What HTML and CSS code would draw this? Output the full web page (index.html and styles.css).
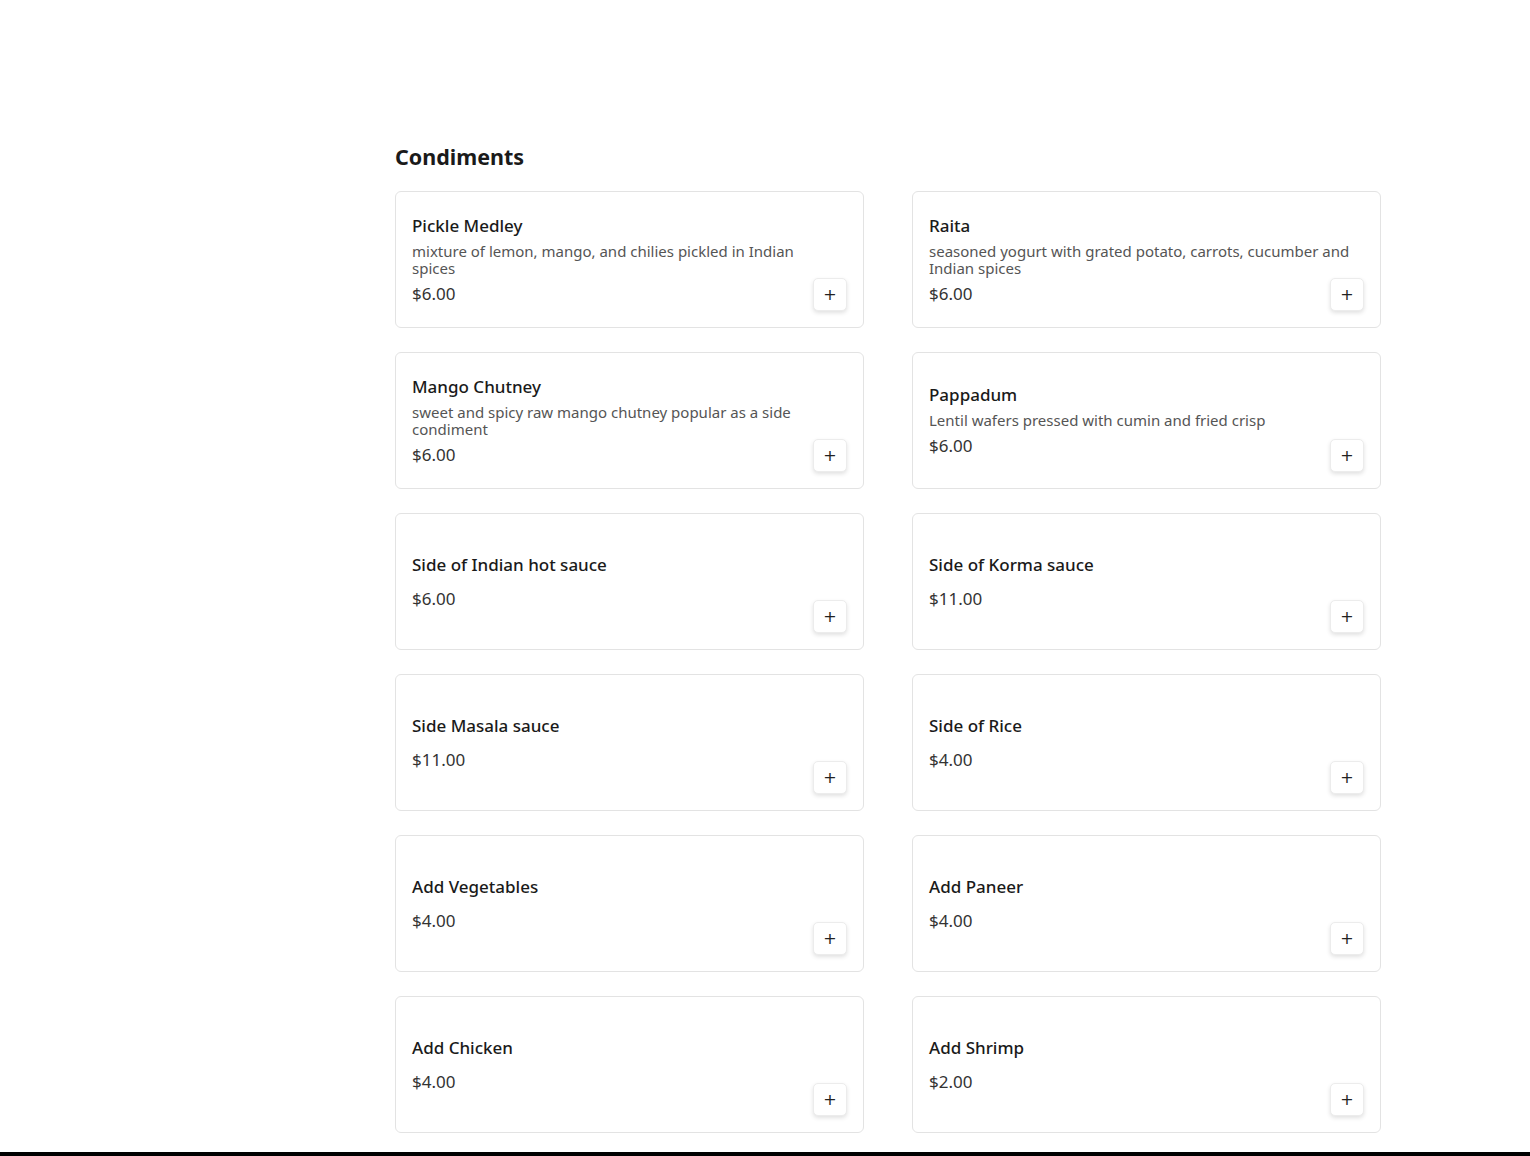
FILE: index.html
```html
<!DOCTYPE html>
<html lang="en">
<head>
<meta charset="utf-8">
<title>Condiments</title>
<link rel="stylesheet" href="styles.css">
</head>
<body>
<main class="menu">
  <section class="section">
    <h2 class="section-title">Condiments</h2>
    <div class="grid">
      <div class="card">
        <div class="info">
          <div class="name">Pickle Medley</div>
          <div class="desc">mixture of lemon, mango, and chilies pickled in Indian spices</div>
          <div class="price">$6.00</div>
        </div>
        <button class="add" aria-label="Add">+</button>
      </div>
      <div class="card">
        <div class="info">
          <div class="name">Raita</div>
          <div class="desc">seasoned yogurt with grated potato, carrots, cucumber and Indian spices</div>
          <div class="price">$6.00</div>
        </div>
        <button class="add" aria-label="Add">+</button>
      </div>
      <div class="card">
        <div class="info">
          <div class="name">Mango Chutney</div>
          <div class="desc">sweet and spicy raw mango chutney popular as a side condiment</div>
          <div class="price">$6.00</div>
        </div>
        <button class="add" aria-label="Add">+</button>
      </div>
      <div class="card">
        <div class="info">
          <div class="name">Pappadum</div>
          <div class="desc">Lentil wafers pressed with cumin and fried crisp</div>
          <div class="price">$6.00</div>
        </div>
        <button class="add" aria-label="Add">+</button>
      </div>
      <div class="card">
        <div class="info">
          <div class="name">Side of Indian hot sauce</div>
          <div class="desc"></div>
          <div class="price">$6.00</div>
        </div>
        <button class="add" aria-label="Add">+</button>
      </div>
      <div class="card">
        <div class="info">
          <div class="name">Side of Korma sauce</div>
          <div class="desc"></div>
          <div class="price">$11.00</div>
        </div>
        <button class="add" aria-label="Add">+</button>
      </div>
      <div class="card">
        <div class="info">
          <div class="name">Side Masala sauce</div>
          <div class="desc"></div>
          <div class="price">$11.00</div>
        </div>
        <button class="add" aria-label="Add">+</button>
      </div>
      <div class="card">
        <div class="info">
          <div class="name">Side of Rice</div>
          <div class="desc"></div>
          <div class="price">$4.00</div>
        </div>
        <button class="add" aria-label="Add">+</button>
      </div>
      <div class="card">
        <div class="info">
          <div class="name">Add Vegetables</div>
          <div class="desc"></div>
          <div class="price">$4.00</div>
        </div>
        <button class="add" aria-label="Add">+</button>
      </div>
      <div class="card">
        <div class="info">
          <div class="name">Add Paneer</div>
          <div class="desc"></div>
          <div class="price">$4.00</div>
        </div>
        <button class="add" aria-label="Add">+</button>
      </div>
      <div class="card">
        <div class="info">
          <div class="name">Add Chicken</div>
          <div class="desc"></div>
          <div class="price">$4.00</div>
        </div>
        <button class="add" aria-label="Add">+</button>
      </div>
      <div class="card">
        <div class="info">
          <div class="name">Add Shrimp</div>
          <div class="desc"></div>
          <div class="price">$2.00</div>
        </div>
        <button class="add" aria-label="Add">+</button>
      </div>
    </div>
  </section>
</main>
<div class="bottom-bar"></div>
</body>
</html>
```
FILE: styles.css
```css
* { box-sizing: border-box; }
html, body { margin: 0; padding: 0; background: #fff; }
body {
  font-family: "Noto Sans", "Open Sans", sans-serif;
  color: #1a1a1a;
}
.menu {
  width: 986px;
  margin: 0 0 0 395px;
  padding-top: 141px;
}
.section-title {
  margin: 0 0 18px;
  font-size: 21.5px;
  line-height: 32px;
  font-weight: 700;
  color: #1a1a1a;
}
.grid {
  display: grid;
  grid-template-columns: 1fr 1fr;
  column-gap: 48px;
  row-gap: 24px;
}
.card {
  height: 137px;
  border: 1px solid #e3e3e3;
  border-radius: 6px;
  padding: 16px;
  display: grid;
  grid-template-columns: 1fr;
  grid-template-rows: 1fr;
}
.info {
  grid-area: 1 / 1;
  align-self: center;
  max-width: 424px;
  display: flex;
  flex-direction: column;
  gap: 5px;
}
.name {
  font-size: 17px;
  line-height: 24px;
  font-weight: 500;
  color: #1a1a1a;
}
.desc {
  font-size: 15px;
  line-height: 17px;
  color: #555;
}
.price {
  font-size: 17px;
  line-height: 24px;
  color: #333;
}
.add {
  grid-area: 1 / 1;
  align-self: end;
  justify-self: end;
  width: 34px;
  height: 33px;
  padding: 0;
  border: 1px solid #ececec;
  border-radius: 5px;
  background: #fff;
  box-shadow: 0 2px 4px rgba(0,0,0,0.12);
  font-family: "DejaVu Sans", sans-serif;
  font-size: 16px;
  line-height: 1;
  color: #222;
  cursor: pointer;
}
.bottom-bar {
  position: fixed;
  left: 0;
  right: 0;
  bottom: 0;
  height: 4px;
  background: #000;
}
```
